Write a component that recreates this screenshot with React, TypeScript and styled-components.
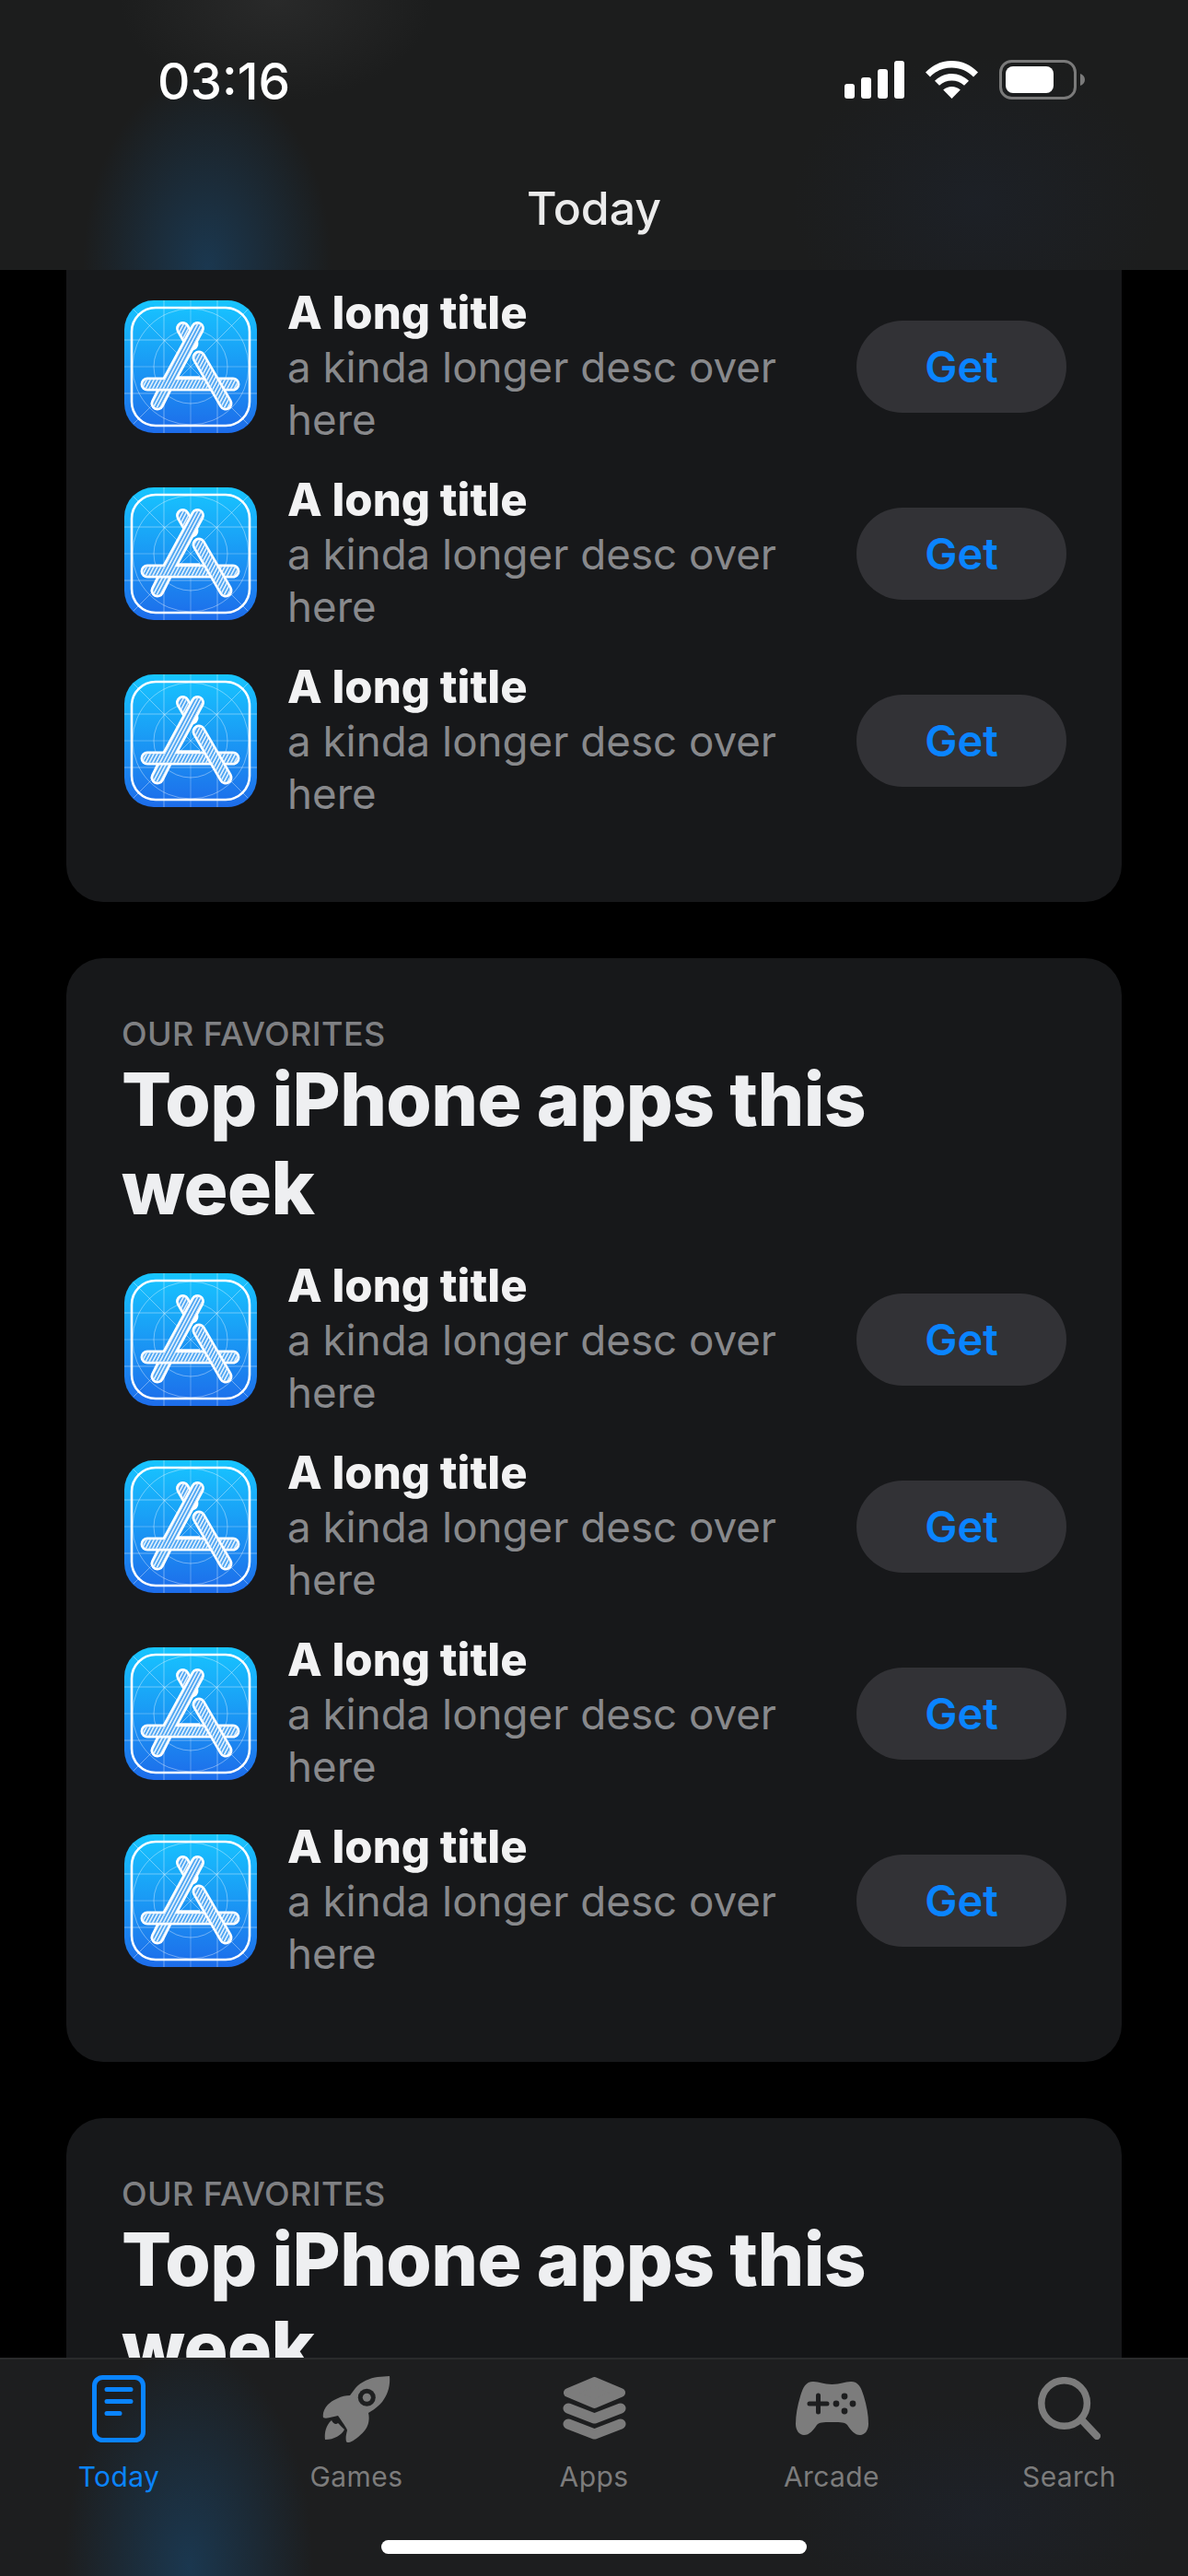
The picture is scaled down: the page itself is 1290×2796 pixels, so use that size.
import React, { useId } from "react";
import styled, { createGlobalStyle } from "styled-components";

const Global = createGlobalStyle`
  html, body { margin: 0; padding: 0; background: #000; }
  * { box-sizing: border-box; }
`;

const Screen = styled.div`
  width: 1290px;
  height: 2796px;
  display: flex;
  flex-direction: column;
  overflow: hidden;
  background: #000;
  font-family: Inter, "Noto Sans", sans-serif;
`;

const Header = styled.header`
  flex: none;
  height: 293px;
  padding: 61px 112px 0 171px;
  background:
    radial-gradient(ellipse 135px 210px at 225px 290px, rgba(26, 62, 92, 0.8), rgba(26, 62, 92, 0) 100%),
    radial-gradient(ellipse 170px 110px at 300px 0px, rgba(80, 80, 80, 0.25), rgba(80, 80, 80, 0) 100%),
    radial-gradient(ellipse 200px 160px at 1060px 220px, rgba(30, 40, 60, 0.3), rgba(30, 40, 60, 0) 100%),
    #1c1d1d;
`;

const StatusBar = styled.div`
  display: flex;
  justify-content: space-between;
  align-items: flex-start;
`;

const Clock = styled.span`
  font-size: 55px;
  line-height: 54px;
  font-weight: 500;
  color: #fff;
`;

const StatusIcons = styled.div`
  display: flex;
  align-items: center;
  gap: 23px;
  margin-top: 4px;
`;

const HeaderTitle = styled.h1`
  margin: 81px 0 0 -59px;
  text-align: center;
  font-size: 50px;
  line-height: 60px;
  font-weight: 500;
  color: #ebebeb;
`;

const Feed = styled.main`
  flex: 1;
  min-height: 0;
  overflow: hidden;
  padding: 0 72px;
  display: flex;
  flex-direction: column;
  gap: 61px;
`;

const Card = styled.section<{ $continued?: boolean }>`
  flex: none;
  background: #17181a;
  border-radius: ${(p) => (p.$continued ? "0 0 40px 40px" : "40px")};
  padding: ${(p) => (p.$continued ? "21px" : "60px")} 60px 91px;
`;

const Eyebrow = styled.div`
  font-size: 36px;
  line-height: 45px;
  font-weight: 500;
  letter-spacing: 0.4px;
  color: #7f8083;
`;

const CardTitle = styled.h2`
  margin: 0 0 33px;
  max-width: 900px;
  font-size: 80px;
  line-height: 96px;
  font-weight: 800;
  letter-spacing: -0.6px;
  color: #eeeff1;
`;

const Rows = styled.div`
  display: flex;
  flex-direction: column;
  gap: 35px;
`;

const Row = styled.div`
  display: flex;
  align-items: center;
  height: 168px;
  padding-left: 3px;
`;

const RowText = styled.div`
  flex: 1;
  margin-left: 33px;
  max-width: 575px;
`;

const RowTitle = styled.div`
  margin-bottom: 3px;
  font-size: 49px;
  line-height: 54px;
  font-weight: 800;
  color: #f2f2f3;
`;

const RowDesc = styled.div`
  font-size: 45.7px;
  line-height: 57px;
  font-weight: 400;
  color: #88898c;
`;

const GetButton = styled.button`
  margin-left: auto;
  flex: none;
  width: 228px;
  height: 100px;
  padding: 0 0 2px;
  border: 0;
  border-radius: 50px;
  background: #323236;
  color: #0a84ff;
  font-family: inherit;
  font-size: 47px;
  font-weight: 600;
`;

const TabBar = styled.nav`
  flex: none;
  height: 237px;
  border-top: 2px solid #2a2b2c;
  position: relative;
  padding-top: 16px;
  background:
    radial-gradient(ellipse 135px 240px at 205px 225px, rgba(26, 62, 92, 0.8), rgba(26, 62, 92, 0) 100%),
    radial-gradient(ellipse 200px 120px at 1060px 170px, rgba(30, 40, 60, 0.3), rgba(30, 40, 60, 0) 100%),
    #1d1e1f;
`;

const Tabs = styled.div`
  display: grid;
  grid-template-columns: repeat(5, 1fr);
`;

const Tab = styled.div<{ $active?: boolean }>`
  display: flex;
  flex-direction: column;
  align-items: center;
  color: ${(p) => (p.$active ? "#0a84ff" : "#7c7c7c")};
`;

const TabIcon = styled.div`
  height: 74px;
  display: flex;
  align-items: center;
  justify-content: center;
`;

const TabLabel = styled.span`
  margin-top: 18px;
  font-size: 30px;
  line-height: 38px;
  font-weight: 400;
  letter-spacing: 0.4px;
`;

const HomeIndicator = styled.div`
  position: absolute;
  left: 414px;
  bottom: 24px;
  width: 462px;
  height: 15px;
  border-radius: 8px;
  background: #fff;
`;

const AppIcon = () => {
  const id = useId().replace(/[^a-zA-Z0-9]/g, "");
  const bg = `bg${id}`;
  const hatch = `hatch${id}`;
  const bar = (d: string) => <path d={d} stroke="#fff" strokeWidth="15" strokeLinecap="round" fill="none" />;
  const inner = (d: string) => (
    <>
      <path d={d} stroke="#4ea6f3" strokeWidth="9.5" strokeLinecap="round" fill="none" />
      <path d={d} stroke={`url(#${hatch})`} strokeWidth="9.5" strokeLinecap="round" fill="none" />
    </>
  );
  const stub = "M36 112 L47 90";
  const heart = "M63.5 30.5 L73 47";
  const horizontal = "M25 91 L118 91";
  const legA = "M79.5 30.5 L47 90";
  const legB = "M81 62 L110 112";
  return (
    <svg width="144" height="144" viewBox="0 0 144 144" style={{ flex: "none" }}>
      <defs>
        <linearGradient id={bg} x1="0" y1="0" x2="0" y2="1">
          <stop offset="0" stopColor="#17c5ff" />
          <stop offset="1" stopColor="#1d6cea" />
        </linearGradient>
        <pattern id={hatch} width="3.4" height="3.4" patternUnits="userSpaceOnUse" patternTransform="rotate(28)">
          <rect width="1.6" height="3.4" fill="#fff" fillOpacity="0.85" />
        </pattern>
      </defs>
      <rect width="144" height="144" rx="32" fill={`url(#${bg})`} />
      <g stroke="#fff" strokeOpacity="0.42" strokeWidth="0.9" fill="none">
        <path d="M43 0V144M101 0V144M0 43H144M0 101H144" />
        <path d="M72 0V144M0 72H144" strokeOpacity="0.18" strokeWidth="1.5" />
        <path d="M10 10L134 134M134 10L10 134" />
        <circle cx="72" cy="72" r="63" />
        <circle cx="72" cy="72" r="40" />
      </g>
      <rect x="8" y="8" width="128" height="128" rx="26" fill="none" stroke="#fff" strokeWidth="2.6" />
      {bar(stub)}
      {inner(stub)}
      {bar(heart)}
      {inner(heart)}
      {bar(horizontal)}
      {bar(legA)}
      {inner(horizontal)}
      {inner(legA)}
      <path d="M57 83.5H82" stroke="#fff" strokeWidth="2.4" />
      {bar(legB)}
      {inner(legB)}
    </svg>
  );
};

const SignalIcon = () => (
  <svg width="65" height="41" viewBox="0 0 65 41" fill="#fff">
    <rect x="0" y="25" width="11" height="16" rx="3" />
    <rect x="18" y="18" width="11" height="23" rx="3" />
    <rect x="36" y="9" width="11" height="32" rx="3" />
    <rect x="54" y="0" width="11" height="41" rx="3" />
  </svg>
);

const WifiIcon = () => (
  <svg width="57" height="41" viewBox="0 0 57 41" fill="#fff">
    <path d="M28.5 0C39.5 0 49.500 4.500 57 12.500L52 17.500C45.800 11 37.500 7.500 28.500 7.500C19.500 7.500 11.200 11 5 17.500L0 12.500C7.500 4.500 17.500 0 28.500 0Z" />
    <path d="M28.500 14C35.500 14 41.800 16.800 47 21.800L42 26.800C38.200 23.300 33.500 21.500 28.500 21.500C23.500 21.500 18.800 23.300 15 26.800L10 21.800C15.200 16.800 21.500 14 28.500 14Z" />
    <path d="M28.500 28C32 28 35.200 29.300 37.800 31.600L28.500 41L19.200 31.600C21.800 29.300 25 28 28.500 28Z" />
  </svg>
);

const BatteryIcon = () => (
  <svg width="93" height="43" viewBox="0 0 93 43">
    <rect x="1.500" y="1.500" width="81" height="40" rx="12" fill="none" stroke="#7a7a7a" strokeWidth="3" />
    <rect x="7" y="7" width="52" height="29" rx="8" fill="#fff" />
    <path d="M88 15C91 16 93 18.500 93 21.500C93 24.500 91 27 88 28Z" fill="#7a7a7a" />
  </svg>
);

const TodayIcon = () => (
  <svg width="58" height="73" viewBox="0 0 58 73" fill="none" stroke="currentColor">
    <rect x="2.500" y="2.500" width="53" height="68" rx="9" strokeWidth="5" />
    <path d="M16 15.500H42M16 28.500H42M16 41.500H30" strokeWidth="5" strokeLinecap="round" />
  </svg>
);

const RocketIcon = () => (
  <svg width="74" height="73" viewBox="0 0 74 73" fill="currentColor">
    <path d="M73 1C74 12 71 21 65 29C62 33 54 39 50 41C51 45 51 50 49 55C47 60 41 66 35 70C31 73 27 74 26 72C25 68 26 64 27 60C27 58 21 50 17 44C12 45 4 48 1 46C0 42 2 36 6 32C11 27 21 22 30 22L36 14C42 7 52 3 60 2Z" />
    <circle cx="48.300" cy="24.300" r="9.500" fill="#1f2021" />
    <circle cx="48.300" cy="24.300" r="4.500" />
    <path d="M10 49C12 53 15 54 17 52C19 54 21 56 24 59C21 65 13 70 3 70C2 63 4 54 10 49Z" />
  </svg>
);

const AppsIcon = () => (
  <svg width="69" height="68" viewBox="0 0 69 68">
    <path d="M6 17L34.500 5L63 17L34.500 29Z" fill="currentColor" stroke="currentColor" strokeWidth="10" strokeLinejoin="round" />
    <path d="M6 34L34.500 45L63 34M6 51L34.500 62L63 51" fill="none" stroke="currentColor" strokeWidth="11" strokeLinejoin="round" strokeLinecap="round" />
  </svg>
);

const ArcadeIcon = () => (
  <svg width="79" height="58" viewBox="0 0 79 58" fill="currentColor">
    <path d="M19 0C26 0 30 3 39.500 3C49 3 53 0 60 0C68 0 71 6 74 16C77 26 79 36 79 46C79 53 75 58 70 58C64 58 60 53 56 47C53 44 50 44 39.500 44C29 44 26 44 23 47C19 53 15 58 9 58C4 58 0 53 0 46C0 36 2 26 5 16C8 6 11 0 19 0Z" />
    <path d="M24.500 15V33M15 24H34" stroke="#1d1e1f" strokeWidth="5" strokeLinecap="round" />
    <g fill="#1d1e1f">
      <circle cx="44" cy="24" r="3.400" />
      <circle cx="62" cy="24" r="3.400" />
      <circle cx="53" cy="16" r="3.400" />
      <circle cx="53" cy="32" r="3.400" />
    </g>
  </svg>
);

const SearchIcon = () => (
  <svg width="68" height="68" viewBox="0 0 68 68" fill="none" stroke="currentColor" strokeWidth="7.500" strokeLinecap="round">
    <circle cx="28.600" cy="28.500" r="24.800" />
    <path d="M47 46L64 64" strokeWidth="8" />
  </svg>
);

const apps = (n: number) =>
  Array.from({ length: n }, (_, i) => (
    <Row key={i}>
      <AppIcon />
      <RowText>
        <RowTitle>A long title</RowTitle>
        <RowDesc>a kinda longer desc over here</RowDesc>
      </RowText>
      <GetButton>Get</GetButton>
    </Row>
  ));

const tabs = [
  { label: "Today", icon: <TodayIcon />, active: true },
  { label: "Games", icon: <RocketIcon /> },
  { label: "Apps", icon: <AppsIcon /> },
  { label: "Arcade", icon: <ArcadeIcon /> },
  { label: "Search", icon: <SearchIcon /> },
];

export default function App() {
  return (
    <Screen>
      <Global />
      <Header>
        <StatusBar>
          <Clock>03:16</Clock>
          <StatusIcons>
            <SignalIcon />
            <WifiIcon />
            <BatteryIcon />
          </StatusIcons>
        </StatusBar>
        <HeaderTitle>Today</HeaderTitle>
      </Header>
      <Feed>
        <Card $continued>
          <Rows>{apps(3)}</Rows>
        </Card>
        <Card>
          <Eyebrow>OUR FAVORITES</Eyebrow>
          <CardTitle>Top iPhone apps this week</CardTitle>
          <Rows>{apps(4)}</Rows>
        </Card>
        <Card>
          <Eyebrow>OUR FAVORITES</Eyebrow>
          <CardTitle>Top iPhone apps this week</CardTitle>
        </Card>
      </Feed>
      <TabBar>
        <Tabs>
          {tabs.map((t) => (
            <Tab key={t.label} $active={t.active}>
              <TabIcon>{t.icon}</TabIcon>
              <TabLabel>{t.label}</TabLabel>
            </Tab>
          ))}
        </Tabs>
        <HomeIndicator />
      </TabBar>
    </Screen>
  );
}
